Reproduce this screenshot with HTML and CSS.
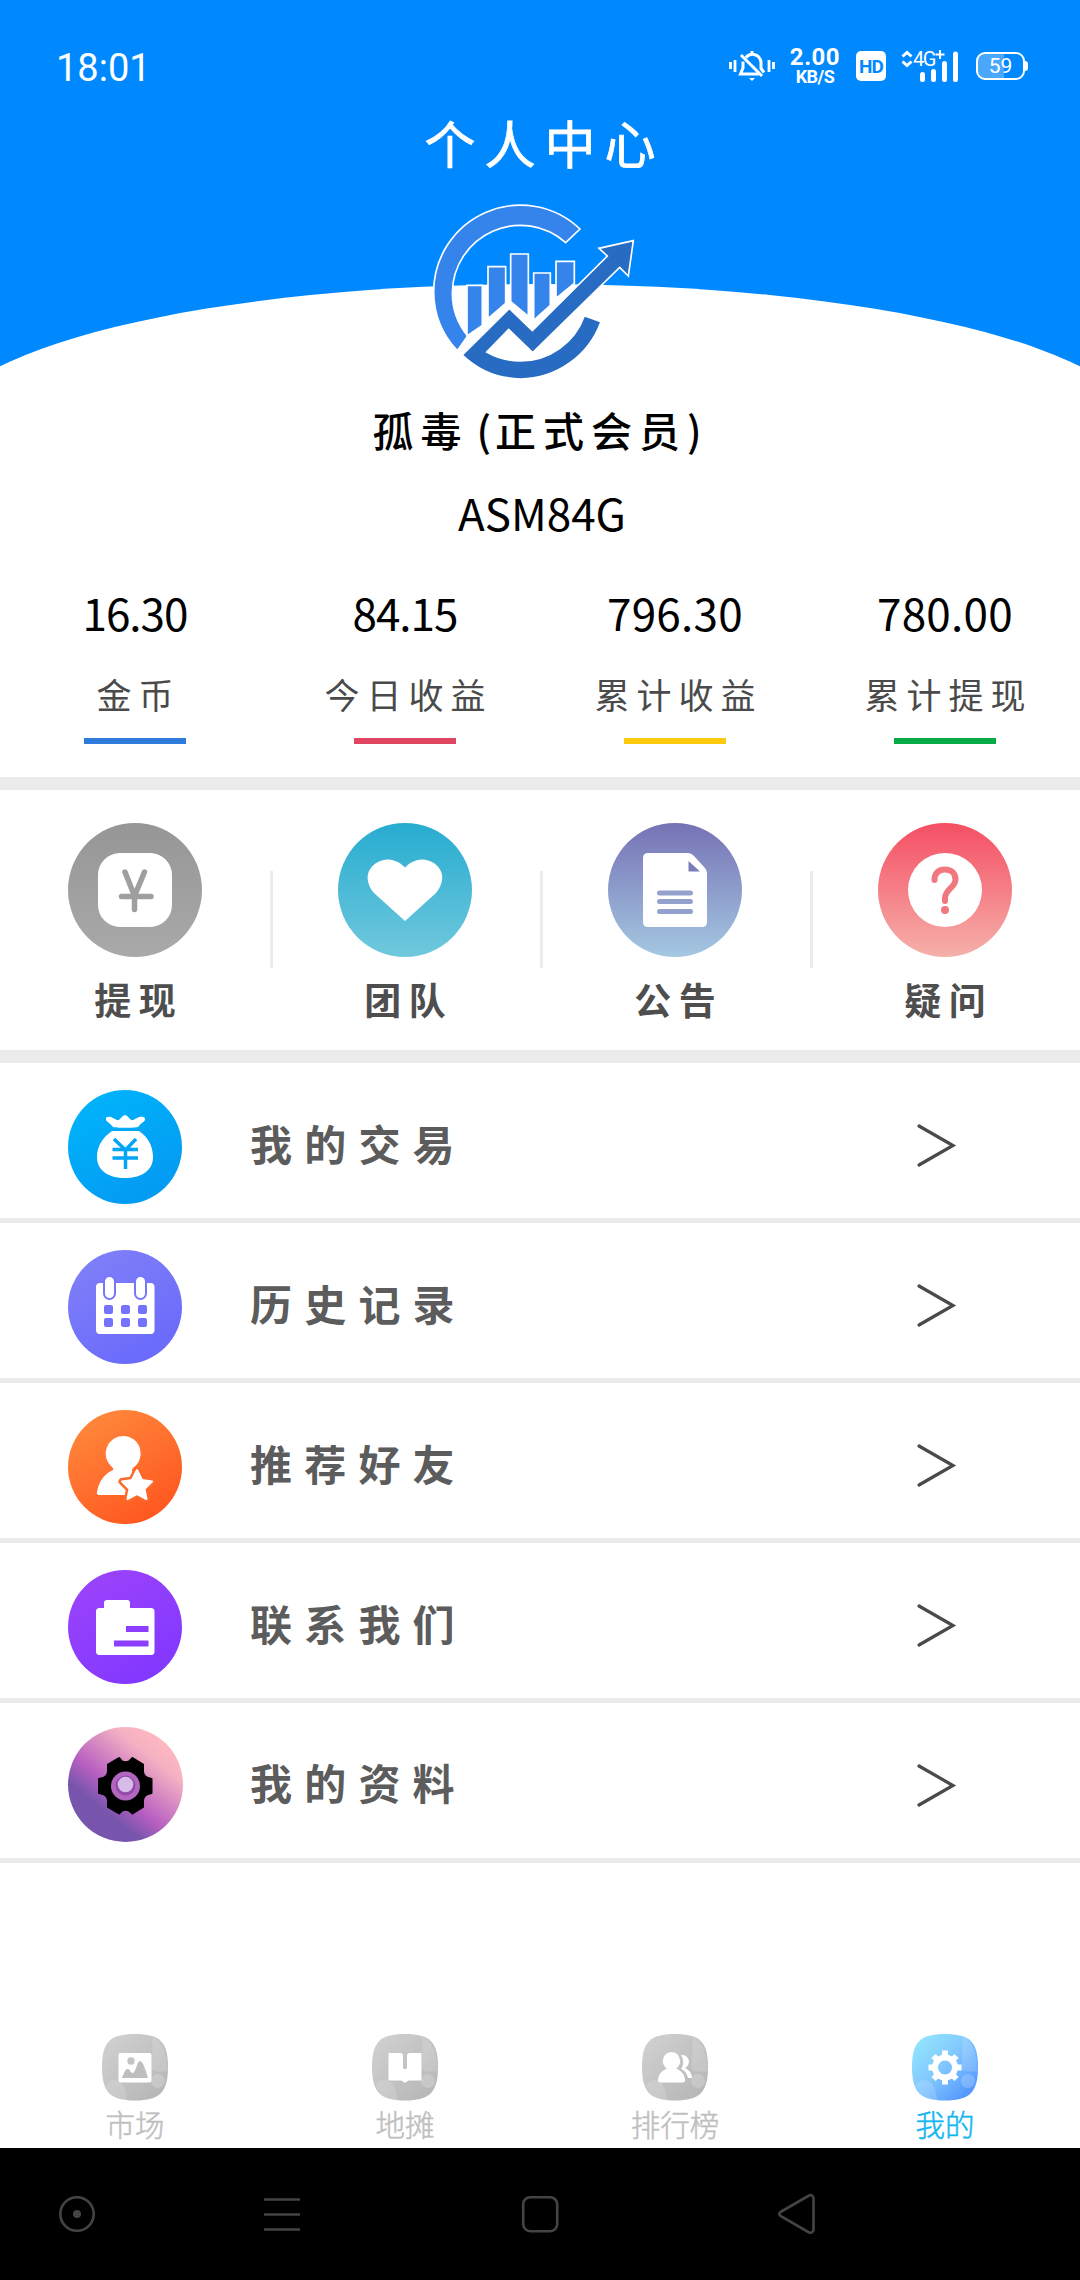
FILE: index.html
```html
<!DOCTYPE html>
<html lang="zh-CN">
<head>
<meta charset="utf-8">
<title>个人中心</title>
<link rel="stylesheet" href="styles.css">
</head>
<body>
<header class="hero">
  <div class="status">
    <span class="clock">18:01</span>
    <div class="status-icons">
      <svg class="bell" width="46" height="32" viewBox="0 0 46 32" fill="none" stroke="#fff">
        <path d="M1.500 12v7M6 10v12M40 10v12M44.500 12v7" stroke-width="2.800"/>
        <path d="M23 1v4M17 7.500c2-2.500 5-3.500 8-3 5 1 7 5 7 9v5l3 4M14 11.500v6.500l-2.500 6h19M12 5l21 21" stroke-width="3"/>
        <path d="M20 28h6l-3 3z" fill="#fff" stroke="none"/>
      </svg>
      <div class="speed"><span class="speed-num">2.00</span><span class="speed-unit">KB/S</span></div>
      <span class="hd">HD</span>
      <svg class="signal" width="58" height="32" viewBox="0 0 58 32">
        <path d="M1.500 6.500 6 2.500l4.500 4M1.500 11.500l4.500 4 4.500-4" fill="none" stroke="#fff" stroke-width="3"/>
        <text class="net" x="12" y="16">4G</text>
        <path d="M34.500 4.500h9M39 0v9" stroke="#fff" stroke-width="2"/>
        <path d="M21.500 29.500v-5M32.500 29.500v-8M43.500 29.500v-16M54.500 29.500V4" stroke="#fff" stroke-width="5" stroke-linecap="round"/>
      </svg>
      <div class="battery">59</div>
    </div>
  </div>
  <h1 class="title">个人中心</h1>
  <svg class="logo" width="260" height="220" viewBox="0 0 780 660" stroke="#fff" stroke-width="5">
    <g fill="#3484ec">
      <path d="M540 147A260 260 0 0 0 101 335 260 260 0 0 0 172 512L203 468A204 204 0 0 1 157 339 204 204 0 0 1 497 188Z"/>
      <path d="M201 316h46v120l-46 32zM264 260h53v110l-53 46zM332 222h53v187l-53-44zM401 279h50v97l-50 45zM468 244h55v66l-55 45z"/>
    </g>
    <path fill="#276bc2" d="M553 407 603 425A260 260 0 0 1 361 597 260 260 0 0 1 187 525L328 385 397 452 622 228 597 205 700 182 685 288 659 262 398 518 326 448 260 516A204 204 0 0 0 361 543 204 204 0 0 0 553 407Z"/>
  </svg>
</header>

<section class="profile">
  <div class="name">孤毒<span class="paren open">(</span>正式会员<span class="paren">)</span></div>
  <div class="code">ASM84G</div>
  <div class="stats">
    <div class="stat blue tight"><b>16.30</b><span>金币</span></div>
    <div class="stat red tight"><b>84.15</b><span>今日收益</span></div>
    <div class="stat yellow"><b>796.30</b><span>累计收益</span></div>
    <div class="stat green"><b>780.00</b><span>累计提现</span></div>
  </div>
</section>

<nav class="actions">
  <a class="action">
    <span class="disc gray"><svg width="134" height="134" viewBox="0 0 134 134">
      <rect x="30" y="30" width="74" height="74" rx="22" fill="#fff"/>
      <path d="M57 49l9.500 24 10-24M53.500 73.500h29.500M66.500 73.500v13" fill="none" stroke="#9f9f9f" stroke-width="5.500" stroke-linecap="round" stroke-linejoin="round"/>
    </svg></span><span>提现</span></a>
  <a class="action">
    <span class="disc teal"><svg width="134" height="134" viewBox="0 0 134 134">
      <path d="M67 98 36 70C20 50 38 36 50 36.500c7 .3 13 3.500 17 8 4-4.500 10-7.700 17-8 12-.5 30 13.500 14 33.500z" fill="#fff"/>
    </svg></span><span>团队</span></a>
  <a class="action">
    <span class="disc indigo"><svg width="134" height="134" viewBox="0 0 134 134">
      <path d="M40 30h39c3 0 5 1 7 3l10 11c2 2 3 4 3 7v48q0 5-5 5H40q-5 0-5-5V35q0-5 5-5z" fill="#fff"/>
      <path d="M80.500 38v10.500H92z" fill="#7c7cb9"/>
      <path d="M51.500 70h31M51.500 78.500h31M51.500 88.500h31" stroke="#94a1cc" stroke-width="5" stroke-linecap="round"/>
    </svg></span><span>公告</span></a>
  <a class="action">
    <span class="disc rose"><svg width="134" height="134" viewBox="0 0 134 134">
      <circle cx="67" cy="67" r="37" fill="#fff"/>
      <path d="M56.500 57c0-7 4-10.500 10.500-10.500s10.500 4 10.500 10c0 8-10.500 10-10.500 18.500v3" fill="none" stroke="#f27880" stroke-width="6" stroke-linecap="round"/>
      <circle cx="67" cy="87" r="4" fill="#f27880"/>
    </svg></span><span>疑问</span></a>
</nav>

<main class="menu">
  <a class="row"><svg class="row-icon" width="114" height="114" viewBox="0 0 114 114">
      <defs><linearGradient id="sky" x1=".2" y1="0" x2=".8" y2="1"><stop offset="0" stop-color="#00b4fb"/><stop offset="1" stop-color="#0498f2"/></linearGradient></defs>
      <circle cx="57" cy="57" r="57" fill="url(#sky)"/>
      <path d="M45 37c-3-4-6-5-7-7-1-3 2-4 5-3l6 3c3 1 4-4 8-5 4 1 5 6 8 5l6-3c3-1 7 0 6 3-1 2-4 3-7 7-2 1-23 1-25 0zM44 41h27c9 6 14 15 14 26 0 14-12 21-28 21S29 81 29 67c0-11 6-20 15-26z" fill="#fff"/>
      <path d="M46 49l11.500 11L68 49M44.500 59.500h25.500M44.500 68h25.500M57.500 59v20" fill="none" stroke="#02a5f6" stroke-width="3.500"/>
    </svg><span>我的交易</span><svg class="arrow" width="40" height="44" viewBox="0 0 40 44"><path d="M2 3l34 19.500L2 42"/></svg></a>
  <a class="row"><svg class="row-icon" width="114" height="114" viewBox="0 0 114 114">
      <defs><linearGradient id="peri" x1=".2" y1="0" x2=".8" y2="1"><stop offset="0" stop-color="#8080f8"/><stop offset="1" stop-color="#6868fc"/></linearGradient></defs>
      <circle cx="57" cy="57" r="57" fill="url(#peri)"/>
      <rect x="28" y="33" width="58.500" height="51" rx="4" fill="#fff"/>
      <g fill="#fff" stroke="#7777fb" stroke-width="2"><rect x="36" y="26" width="11" height="23" rx="5.500"/><rect x="67" y="26" width="11" height="23" rx="5.500"/></g>
      <g fill="#7373fb"><rect x="36" y="55" width="9" height="9" rx="2"/><rect x="53" y="55" width="9" height="9" rx="2"/><rect x="70" y="55" width="9" height="9" rx="2"/><rect x="36" y="68" width="9" height="9" rx="2"/><rect x="53" y="68" width="9" height="9" rx="2"/><rect x="70" y="68" width="9" height="9" rx="2"/></g>
    </svg><span>历史记录</span><svg class="arrow" width="40" height="44" viewBox="0 0 40 44"><path d="M2 3l34 19.500L2 42"/></svg></a>
  <a class="row"><svg class="row-icon" width="114" height="114" viewBox="0 0 114 114">
      <defs><linearGradient id="orange" x1=".2" y1="0" x2=".8" y2="1"><stop offset="0" stop-color="#ff893d"/><stop offset="1" stop-color="#ff541d"/></linearGradient></defs>
      <circle cx="57" cy="57" r="57" fill="url(#orange)"/>
      <path d="M55 26a17.500 17.500 0 0 1 10 32c-2 2-1 4 2 5v22H32c-3 0-3.500-1-3-3 2-11 7-17 14-21 3-1 3-2 1-4a17.500 17.500 0 0 1 11-31z" fill="#fff"/>
      <path d="M69 60l5 10 10 1.500-7.500 7.500 2 10-9.500-5-9.500 5 2-10-7.500-7.500 10-1.500z" fill="#fff" stroke="#ff682b" stroke-width="7" stroke-linejoin="round"/>
      <path d="M69 60l5 10 10 1.500-7.500 7.500 2 10-9.500-5-9.500 5 2-10-7.500-7.500 10-1.500z" fill="#fff" stroke="#fff" stroke-width="2" stroke-linejoin="round"/>
    </svg><span>推荐好友</span><svg class="arrow" width="40" height="44" viewBox="0 0 40 44"><path d="M2 3l34 19.500L2 42"/></svg></a>
  <a class="row"><svg class="row-icon" width="114" height="114" viewBox="0 0 114 114">
      <defs><linearGradient id="violet" x1=".2" y1="0" x2=".8" y2="1"><stop offset="0" stop-color="#9b43fb"/><stop offset="1" stop-color="#8137ff"/></linearGradient></defs>
      <circle cx="57" cy="57" r="57" fill="url(#violet)"/>
      <path d="M39 30h20q3 0 3 3v5h21q3.500 0 3.500 3.500v40q0 3.500-3.500 3.500H31.500q-3.500 0-3.500-3.500v-40q0-3.500 3.500-3.500H36v-5q0-3 3-3z" fill="#fff"/>
      <path d="M58 59h22.500M46 73.500h34.500" stroke="#8c3dfd" stroke-width="6"/>
    </svg><span>联系我们</span><svg class="arrow" width="40" height="44" viewBox="0 0 40 44"><path d="M2 3l34 19.500L2 42"/></svg></a>
  <a class="row last"><svg class="row-icon" width="115" height="115" viewBox="0 0 115 115">
      <defs><linearGradient id="dusk" x1=".85" y1=".1" x2=".2" y2=".9"><stop offset="0" stop-color="#ffb9bf"/><stop offset=".2" stop-color="#f4b1c2"/><stop offset=".6" stop-color="#b85fc2"/><stop offset=".8" stop-color="#7755ac"/><stop offset="1" stop-color="#7755ac"/></linearGradient></defs>
      <circle cx="57.500" cy="57.500" r="57.500" fill="url(#dusk)"/>
      <path d="M51 31 54 34.500Q57.500 36 61 34.500L64.500 31 75 37.500V45Q76 50 80 51L83.500 52V66L80 67Q76 68 75 73V80L64.500 86.500 61 83.500Q57.500 82 54 83.500L51 86.500 40 80V73Q39 68 35 67L31 66V52L35 51Q39 50 40 45V37.500Z" fill="#000" stroke="#000" stroke-width="2" stroke-linejoin="round"/>
      <circle cx="57.500" cy="59" r="14.500" fill="#b366c0"/><circle cx="57.500" cy="58.500" r="10" fill="#934da9"/><circle cx="57.500" cy="57.500" r="7.800" fill="#d7bbe8"/>
    </svg><span>我的资料</span><svg class="arrow" width="40" height="44" viewBox="0 0 40 44"><path d="M2 3l34 19.500L2 42"/></svg></a>
</main>

<footer class="tabs">
  <svg class="defs" width="0" height="0">
    <defs>
      <linearGradient id="tg" x1="0" y1="0" x2="1" y2="1"><stop offset=".1" stop-color="#cfcfcf"/><stop offset="1" stop-color="#b4b4b4"/></linearGradient>
      <linearGradient id="tb" x1="0" y1="0" x2="1" y2="1"><stop offset=".1" stop-color="#92e4fe"/><stop offset=".5" stop-color="#80c5fe"/><stop offset="1" stop-color="#4389fd"/></linearGradient>
      <path id="tile" d="M33 0C58 0 66 8 66 33S58 66.500 33 66.500 0 58 0 33 8 0 33 0z"/>
      <g id="shine"><path d="M4 51C10 42 24 44 25 66 12 65 6 60 4 51zM50 36c4 2 10 2 15.500 1-.5-20-6-30-15-34z" fill="#fff" opacity=".15"/><circle cx="56" cy="47" r="7" fill="#fff" opacity=".2"/></g>
    </defs>
  </svg>
  <a class="tab"><svg width="66" height="67" viewBox="0 0 66 67"><use href="#tile" fill="url(#tg)"/><use href="#shine"/><rect x="16.500" y="19" width="33" height="29.500" rx="2" fill="#fff"/><circle cx="29" cy="27" r="3.700" fill="#c4c4c4"/><path d="M20 44c2-5 3-9 6-9 2 0 2 4 5 4 3-1 4-12 7-12s6 10 8 17z" fill="#bebebe"/></svg><span>市场</span></a>
  <a class="tab"><svg width="66" height="67" viewBox="0 0 66 67"><use href="#tile" fill="url(#tg)"/><use href="#shine"/><path d="M16.500 19h11c3 0 3.500 1 3.500 3v11c0 3 4 3 4 0V22c0-2 .5-3 3.500-3h11v27.500h-11c-4 0-3 2-5.500 2s-1.500-2-5.500-2h-11z" fill="#fff"/></svg><span>地摊</span></a>
  <a class="tab"><svg width="66" height="67" viewBox="0 0 66 67"><use href="#tile" fill="url(#tg)"/><use href="#shine"/><path d="M29 18a9 9 0 0 1 5 16.500c5 2 9 6 9 12 0 1-1 2-2 2H18c-1 0-2-1-2-2 0-6 4-10 9-12A9 9 0 0 1 29 18zM39 21c8-1 11 9 4 13 4 2 7 5 7 10h-4c-1-5-4-8-7-9 3-5 3-9 0-14z" fill="#fff"/></svg><span>排行榜</span></a>
  <a class="tab active"><svg width="66" height="67" viewBox="0 0 66 67"><use href="#tile" fill="url(#tb)"/><use href="#shine"/><circle cx="33" cy="33.500" r="10" fill="none" stroke="#fff" stroke-width="6"/><path d="M33 16.500v6M33 44.500v6M16.500 33.500h6M43.500 33.500h6M21.500 22l4 4M40.500 41l4 4M44.500 22l-4 4M25.500 41l-4 4" stroke="#fff" stroke-width="6"/></svg><span>我的</span></a>
</footer>

<div class="sysnav">
  <svg width="38" height="38" viewBox="0 0 38 38"><circle cx="19" cy="19" r="16.700"/><circle class="dot" cx="19" cy="19" r="4"/></svg>
  <svg width="36" height="38" viewBox="0 0 36 38"><path d="M0 4.500h36M0 19.500h36M0 34.500h36"/></svg>
  <svg width="38" height="38" viewBox="0 0 38 38"><rect x="2.200" y="2.200" width="34" height="34" rx="7"/></svg>
  <svg width="38" height="42" viewBox="0 0 38 42"><path d="M3.500 19 32 2.500q4-1.500 4.500 3v31q-.5 4-4.500 3L3.500 23q-2.500-2 0-4z"/></svg>
</div>
</body>
</html>
```

FILE: styles.css
```css
* { box-sizing: border-box; }
body {
  margin: 0;
  width: 1080px;
  height: 2280px;
  display: flex;
  flex-direction: column;
  background: #fff;
  font-family: "Noto Sans CJK SC", sans-serif;
  line-height: 1;
  overflow: hidden;
}
svg { display: block; flex: none; overflow: visible; }

.hero {
  position: relative;
  height: 400px;
  background: #0088ff;
  overflow: hidden;
  display: flex;
  flex-direction: column;
  align-items: center;
}
.hero::before {
  content: "";
  position: absolute;
  left: -60px;
  top: 284px;
  width: 1200px;
  height: 292px;
  border-radius: 50%;
  background: #fff;
}
.status {
  width: 100%;
  height: 110px;
  padding: 48px 55px 0 56px;
  display: flex;
  justify-content: space-between;
  color: #fff;
  font-family: Roboto, sans-serif;
}
.clock { font-size: 38px; line-height: 40px; }
.status-icons { display: flex; align-items: flex-start; height: 36px; }
.bell { margin: 2px 15px 0 0; }
.speed {
  width: 50px;
  display: flex;
  flex-direction: column;
  align-items: center;
  font-weight: 700;
}
.speed-num { font-size: 24px; line-height: 19px; letter-spacing: .5px; }
.speed-unit { font-size: 18px; line-height: 20px; letter-spacing: -.5px; }
.hd {
  width: 30px;
  height: 30px;
  margin: 3px 15px 0 16px;
  border-radius: 5px;
  background: #fff;
  color: #0088ff;
  font-size: 19px;
  font-weight: 700;
  letter-spacing: -1px;
  line-height: 31px;
  text-align: center;
}
.signal { margin-top: 2px; }
.net { font-size: 20px; letter-spacing: -1.500px; fill: #fff; font-family: Roboto, sans-serif; }
.battery {
  position: relative;
  width: 49px;
  height: 28px;
  margin: 4px 0 0 17px;
  border: 2.500px solid #fff;
  border-radius: 9px;
  background: linear-gradient(90deg, #4aa8fc 58%, transparent 58%);
  font-size: 21px;
  line-height: 24px;
  text-align: center;
}
.battery::after {
  content: "";
  position: absolute;
  right: -5px;
  top: 7px;
  width: 3px;
  height: 10px;
  border-radius: 0 3px 3px 0;
  background: #fff;
}
.title {
  margin: 6px 0 12px;
  padding-left: 9px;
  color: #fff;
  font-size: 51px;
  font-weight: 400;
  letter-spacing: 9px;
  line-height: 52px;
  -webkit-text-stroke: .8px #fff;
}
.logo { position: relative; margin-right: 20px; }

.profile {
  height: 377px;
  display: flex;
  flex-direction: column;
  align-items: center;
}
.name {
  display: flex;
  margin-top: 8px;
  padding-right: 2px;
  font-size: 41px;
  font-weight: 500;
  letter-spacing: 7px;
  line-height: 42px;
}
.paren { letter-spacing: 4px; }
.paren.open { margin-left: 8px; }
.code { margin-top: 40px; padding-left: 4px; font-size: 44px; line-height: 44px; }
.stats {
  width: 100%;
  display: grid;
  grid-template-columns: repeat(4, 1fr);
  margin-top: 56px;
}
.stat { display: flex; flex-direction: column; align-items: center; }
.stat b { font-size: 44px; font-weight: 400; line-height: 44px; letter-spacing: .3px; }
.tight b { letter-spacing: -1px; }
.stat span {
  margin-top: 42px;
  padding-left: 7px;
  color: #4a4a4a;
  font-size: 35px;
  letter-spacing: 7px;
  line-height: 36px;
}
.stat::after { content: ""; width: 102px; height: 6px; margin-top: 26px; background: var(--bar); }
.blue { --bar: #2f7bdc; }
.red { --bar: #e04562; }
.yellow { --bar: #fdc90e; }
.green { --bar: #07aa46; }

.actions {
  height: 286px;
  border: solid #ebebeb;
  border-width: 13px 0;
  display: grid;
  grid-template-columns: repeat(4, 1fr);
}
.action {
  display: flex;
  flex-direction: column;
  align-items: center;
  gap: 23px;
  padding-top: 33px;
  color: #4e4e4e;
  font-size: 37px;
  font-weight: 700;
  letter-spacing: 7.500px;
  line-height: 38px;
}
.action + .action { background: linear-gradient(#ebebeb, #ebebeb) 0 81px / 3px 97px no-repeat; }
.action > span:last-child { padding-left: 7.500px; }
.disc { width: 134px; height: 134px; border-radius: 50%; }
.gray { background: linear-gradient(#969696, #a9a9a9); }
.teal { background: linear-gradient(#27acd0, #70c8dd); }
.indigo { background: linear-gradient(#7672b5, #a4c8e2); }
.rose { background: linear-gradient(#f54f64, #f5b0aa); }

.row {
  height: 160px;
  padding: 26.500px 123px 0 68px;
  border-bottom: 5px solid #ebebeb;
  display: flex;
  color: #5c5c5c;
  font-size: 42px;
  font-weight: 700;
  letter-spacing: 12.200px;
}
.row > span { flex: 1; margin-left: 68px; line-height: 105px; }
.row.last { padding-top: 24px; }
.row.last > span { margin-left: 67px; line-height: 110px; }
.arrow { margin-top: 33.500px; fill: none; stroke: #4a4a4a; stroke-width: 3.200; stroke-linecap: round; }
.last .arrow { margin-top: 36px; }

.tabs {
  height: 285px;
  padding-top: 171px;
  display: grid;
  grid-template-columns: repeat(4, 1fr);
}
.defs { position: absolute; }
.tab {
  display: flex;
  flex-direction: column;
  align-items: center;
  gap: 6px;
  color: #bfbfbf;
  font-size: 29.500px;
  font-weight: 300;
  line-height: 32px;
  -webkit-text-stroke: .5px currentColor;
}
.active { color: #13b7f0; }

.sysnav {
  flex: 1;
  display: flex;
  align-items: center;
  padding-left: 58px;
  background: #000;
}
.sysnav svg { fill: none; stroke: #444; stroke-width: 2.600; }
.sysnav svg:nth-child(2) { margin-left: 168px; }
.sysnav svg:nth-child(3) { margin-left: 221px; }
.sysnav svg:nth-child(4) { margin-left: 218px; }
.sysnav .dot { fill: #444; stroke: none; }
```
